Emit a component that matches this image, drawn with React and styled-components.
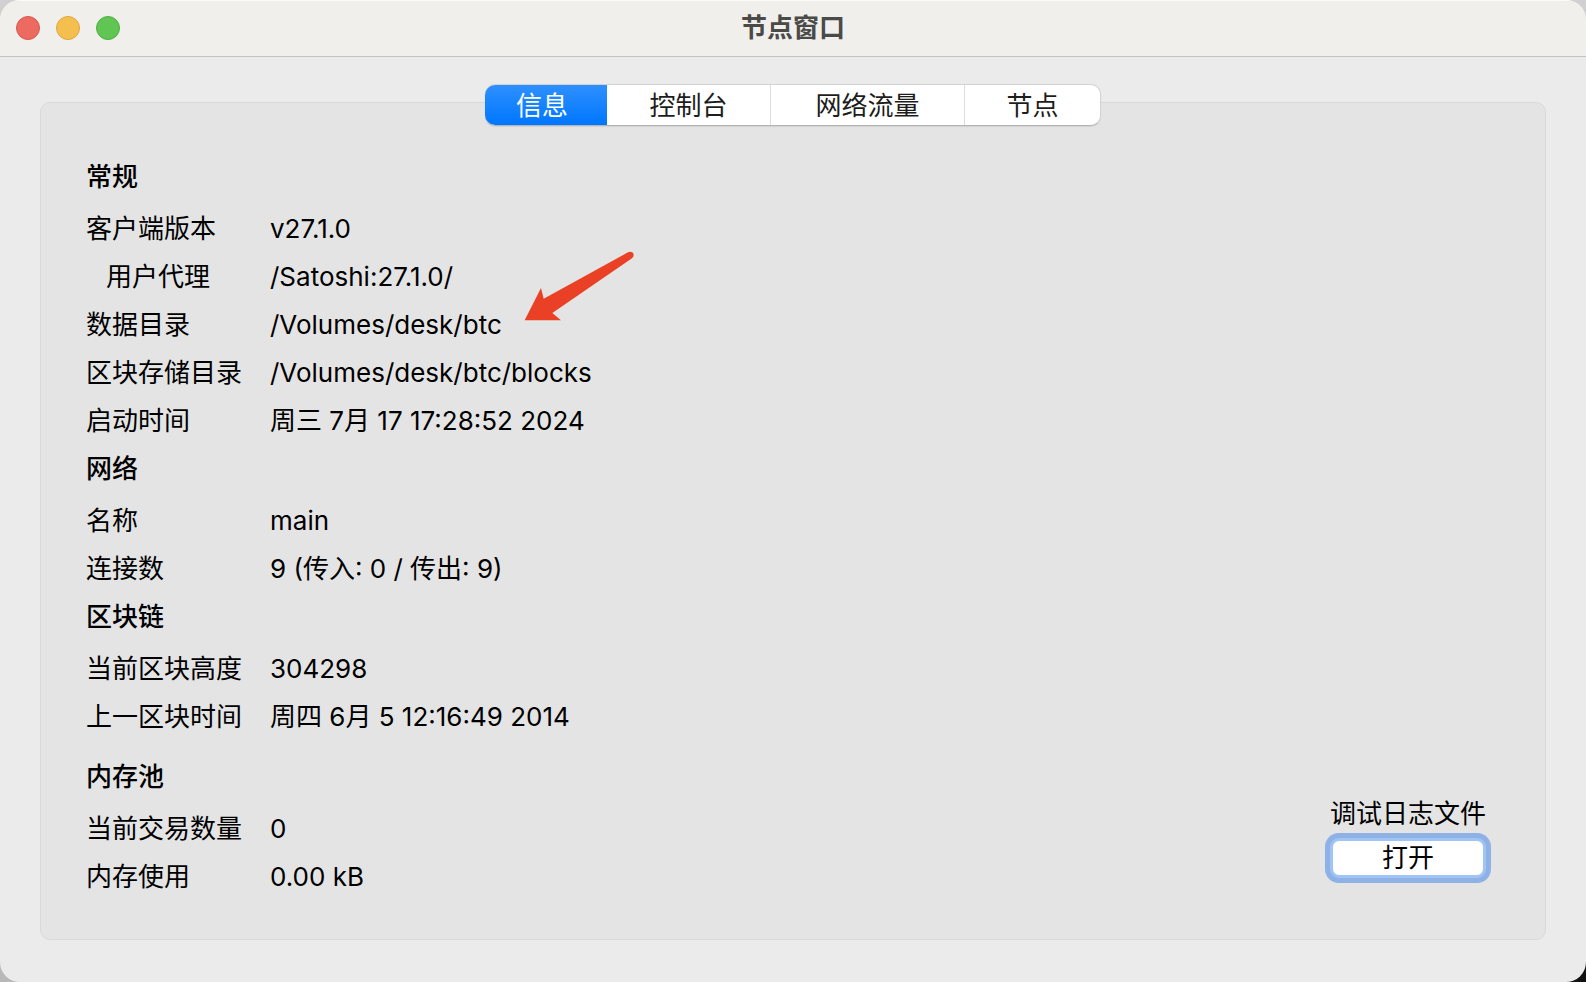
import React, { useState } from "react";
import styled, { createGlobalStyle, css } from "styled-components";

const GlobalStyle = createGlobalStyle`
  * { box-sizing: border-box; }
  body {
    margin: 0;
    color: #000;
    background:
      linear-gradient(#d0d0d0, #d0d0d0) top / 100% 50% no-repeat,
      linear-gradient(to right, #b9b9b9 50%, #111 50%);
    font: 26px/48px Inter, "Noto Sans CJK SC", sans-serif;
  }
  h1, h2, dl, dd { margin: 0; }
  button { font: inherit; color: inherit; }
`;

const Window = styled.div`
  display: flex;
  flex-direction: column;
  min-height: 100vh;
  overflow: hidden;
  border-radius: 20px;
  background: #ebebeb;
`;

const TitleBar = styled.header`
  display: grid;
  grid-template-columns: 1fr auto 1fr;
  align-items: center;
  height: 57px;
  padding: 0 16px;
  border-bottom: 1px solid #c4c3c1;
  background: #f0efeb;
  box-shadow: inset 0 1px 0 #fafaf8;
`;

const Lights = styled.div`
  display: flex;
  gap: 16px;
`;

const Light = styled.button`
  width: 24px;
  height: 24px;
  padding: 0;
  border: 1px solid ${(p) => p.$edge};
  border-radius: 50%;
  background: ${(p) => p.$color};
`;

const Title = styled.h1`
  font-size: 26px;
  line-height: 54px;
  font-weight: 700;
  color: #4a4a49;
`;

const Content = styled.main`
  display: flex;
  flex: 1;
  flex-direction: column;
  padding: 27px 40px 42px;
`;

const Tabs = styled.div`
  position: relative;
  z-index: 1;
  display: flex;
  align-self: center;
  height: 42px;
  margin-bottom: -24px;
  border: 1px solid #d2d2d2;
  border-bottom-color: #b4b4b4;
  border-radius: 10px;
  background: #fff;
  box-shadow: 0 1px 1px rgba(0, 0, 0, 0.08);
`;

const Tab = styled.button`
  display: flex;
  align-items: center;
  justify-content: center;
  width: ${(p) => p.$width}px;
  padding: 2px 0 0;
  border: 0;
  border-right: 1px solid #dcdcdc;
  background: transparent;
  color: #1d1d1d;
  line-height: 38px;

  &:first-child {
    padding-right: 8px;
    border-radius: 10px 0 0 10px;
  }
  &:last-child {
    border-right: 0;
    border-radius: 0 10px 10px 0;
  }
  ${(p) =>
    p.$active &&
    css`
      margin: 0 0 0 -1px;
      border-right: 0;
      background: linear-gradient(#2e90ff, #0076ff);
      color: #fff;
    `}
`;

const Panel = styled.section`
  display: flex;
  flex: 1;
  justify-content: space-between;
  padding: 50px 59px 37px 45px;
  border: 1px solid #d9d9d9;
  border-radius: 10px;
  background: #e4e4e4;
`;

const Group = styled.section`
  margin-top: ${(p) => (p.$spaced ? 12 : 0)}px;
`;

const GroupTitle = styled.h2`
  margin-bottom: 4px;
  font-size: 26px;
  font-weight: 500;
`;

const Row = styled.div`
  position: relative;
  display: grid;
  grid-template-columns: 184px auto;
`;

const Term = styled.dt`
  padding-left: ${(p) => (p.$indent ? 20 : 0)}px;
`;

const Arrow = styled.svg`
  position: absolute;
  left: 438px;
  top: -50px;
  width: 110px;
  height: 70px;
`;

const LogBox = styled.div`
  display: flex;
  flex-direction: column;
  align-self: flex-end;
  padding-bottom: 24px;
`;

const OpenButton = styled.button`
  height: 40px;
  padding: 0;
  border: 3px solid #a1c4f6;
  border-radius: 9px;
  background: #fff;
  line-height: 32px;
  box-shadow: 0 0 0 5px #8eb1e6;
  outline: 0;
`;

const tabs = [
  { name: "信息", width: 122 },
  { name: "控制台", width: 164 },
  { name: "网络流量", width: 194 },
  { name: "节点", width: 135 },
];

const groups = [
  {
    title: "常规",
    rows: [
      { label: "客户端版本", value: "v27.1.0" },
      { label: "用户代理", value: "/Satoshi:27.1.0/", indent: true },
      { label: "数据目录", value: "/Volumes/desk/btc", arrow: true },
      { label: "区块存储目录", value: "/Volumes/desk/btc/blocks" },
      { label: "启动时间", value: "周三 7月 17 17:28:52 2024" },
    ],
  },
  {
    title: "网络",
    rows: [
      { label: "名称", value: "main" },
      { label: "连接数", value: "9 (传入: 0 / 传出: 9)" },
    ],
  },
  {
    title: "区块链",
    rows: [
      { label: "当前区块高度", value: "304298" },
      { label: "上一区块时间", value: "周四 6月 5 12:16:49 2014" },
    ],
  },
  {
    title: "内存池",
    spaced: true,
    rows: [
      { label: "当前交易数量", value: "0" },
      { label: "内存使用", value: "0.00 kB" },
    ],
  },
];

export default function App() {
  const [active, setActive] = useState("信息");
  return (
    <>
      <GlobalStyle />
      <Window>
        <TitleBar>
          <Lights>
            <Light $color="#ec6a5f" $edge="#d65a50" aria-label="关闭" />
            <Light $color="#f5bf4f" $edge="#dba73f" aria-label="最小化" />
            <Light $color="#61c554" $edge="#4fae43" aria-label="缩放" />
          </Lights>
          <Title>节点窗口</Title>
        </TitleBar>
        <Content>
          <Tabs role="tablist">
            {tabs.map((t) => (
              <Tab
                key={t.name}
                role="tab"
                aria-selected={t.name === active}
                $active={t.name === active}
                $width={t.width}
                onClick={() => setActive(t.name)}
              >
                {t.name}
              </Tab>
            ))}
          </Tabs>
          <Panel>
            <div>
              {groups.map((g) => (
                <Group key={g.title} $spaced={g.spaced}>
                  <GroupTitle>{g.title}</GroupTitle>
                  <dl>
                    {g.rows.map((r) => (
                      <Row key={r.label}>
                        <Term $indent={r.indent}>{r.label}</Term>
                        <dd>{r.value}</dd>
                        {r.arrow && (
                          <Arrow viewBox="0 0 330 210" aria-hidden="true">
                            <path
                              d="M2 208 51 111 59 143 312 4C320 0 329 4 329 12Q329 18 324 22L85 186 111 208Z"
                              fill="#ea4025"
                            />
                          </Arrow>
                        )}
                      </Row>
                    ))}
                  </dl>
                </Group>
              ))}
            </div>
            <LogBox>
              <span id="log-label">调试日志文件</span>
              <OpenButton aria-describedby="log-label">打开</OpenButton>
            </LogBox>
          </Panel>
        </Content>
      </Window>
    </>
  );
}
